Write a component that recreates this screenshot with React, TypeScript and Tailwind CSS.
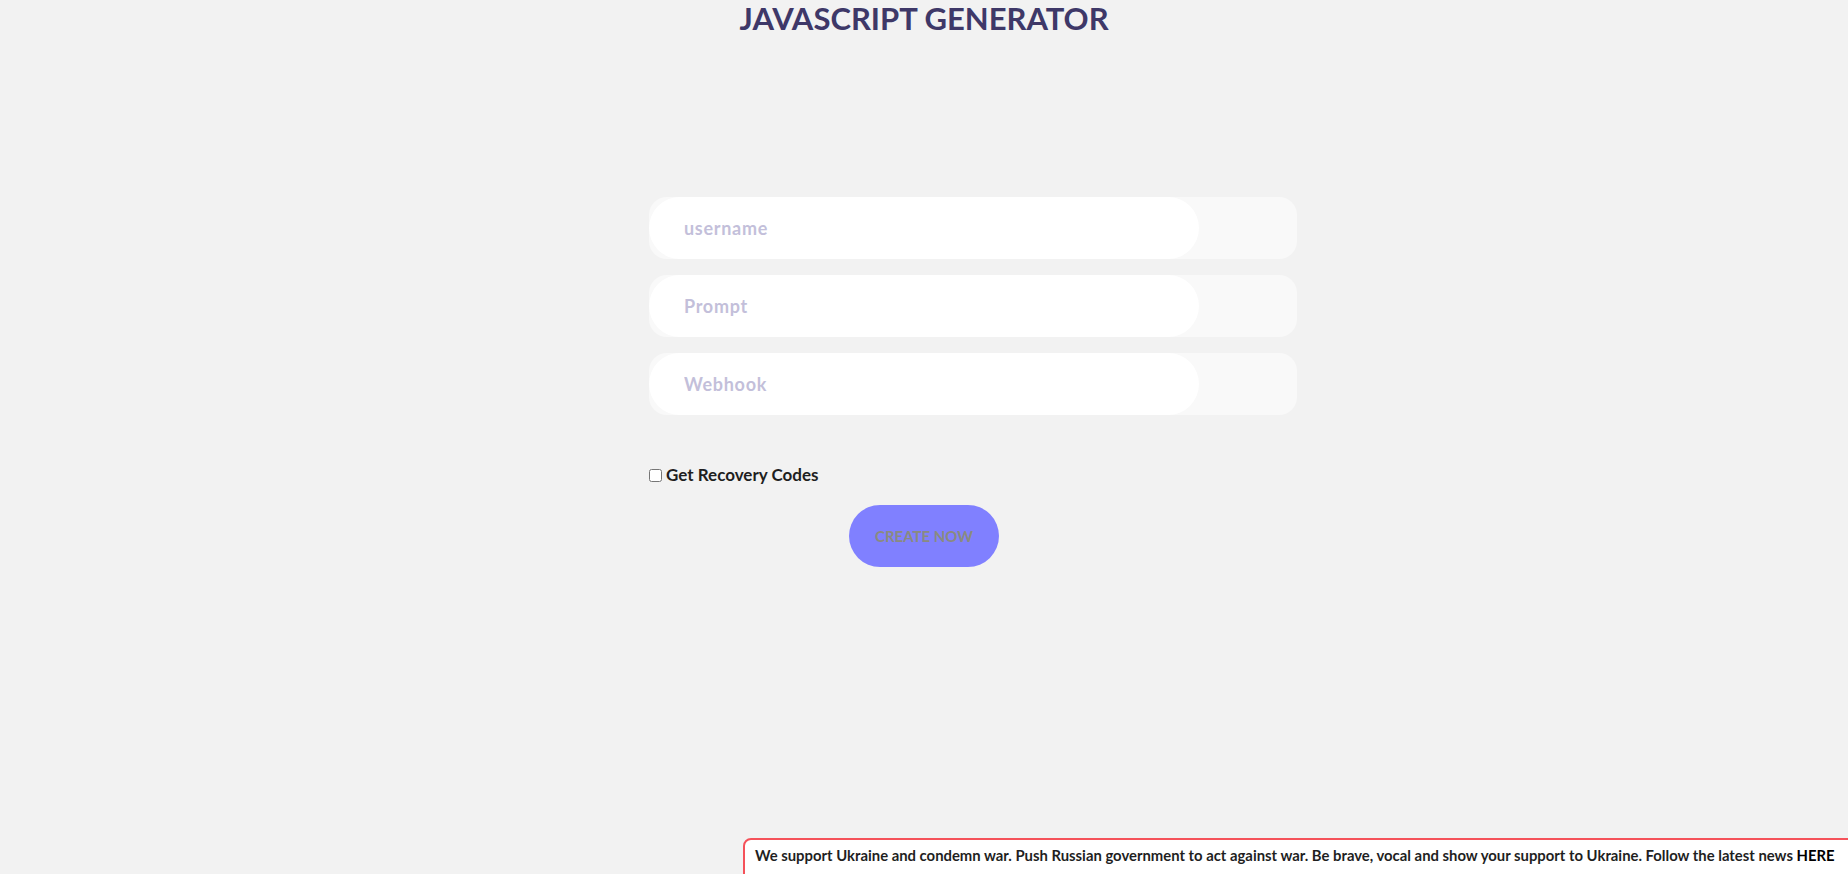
import React from 'react';

const fields = ['username', 'Prompt', 'Webhook'];

const App: React.FC = () => {
  return (
    <div className="min-h-screen bg-[#f2f2f2] font-[Lato,sans-serif]">
      <h1 className="text-center text-[31px] leading-[36px] font-bold text-[#3e3868]">
        JAVASCRIPT GENERATOR
      </h1>

      <form className="w-[550px] mx-auto mt-[161px]" onSubmit={e => e.preventDefault()}>
        <div className="flex flex-col gap-4">
          {fields.map(name => (
            <div key={name} className="w-[648px] h-[62px] rounded-[18px] bg-[#f9f9f9]">
              <input
                type="text"
                placeholder={name}
                className="w-[550px] h-full rounded-full bg-white pl-[35px] text-[18px] tracking-[0.7px] font-bold text-[#3e3868] outline-none placeholder:text-[#c3bfda]"
              />
            </div>
          ))}
        </div>

        {/* recovery codes */}
        <label className="mt-[50px] flex items-center h-5 text-[17px] font-bold text-[#1f1f1f]">
          <input type="checkbox" className="m-0 mr-[4px] w-[13px] h-[13px]" />
          Get Recovery Codes
        </label>

        <div className="mt-5 flex justify-center">
          <button
            type="submit"
            className="w-[150px] h-[62px] rounded-full bg-[#8080ff] text-[15px] font-bold uppercase text-[#8a8b80]"
          >
            Create now
          </button>
        </div>
      </form>

      <div className="fixed left-[743px] top-[838px] right-[-2px] h-[60px] bg-white border-2 border-[#f5525a] rounded-tl-[8px] pl-[10px] pt-[5px] overflow-hidden">
        <p className="whitespace-nowrap text-[14.85px] leading-5 font-bold text-[#1f1f1f]">
          We support Ukraine and condemn war. Push Russian government to act against war. Be brave,
          vocal and show your support to Ukraine. Follow the latest news{' '}
          <a href="#" className="text-black">HERE</a>
        </p>
      </div>
    </div>
  );
};

export default App;
